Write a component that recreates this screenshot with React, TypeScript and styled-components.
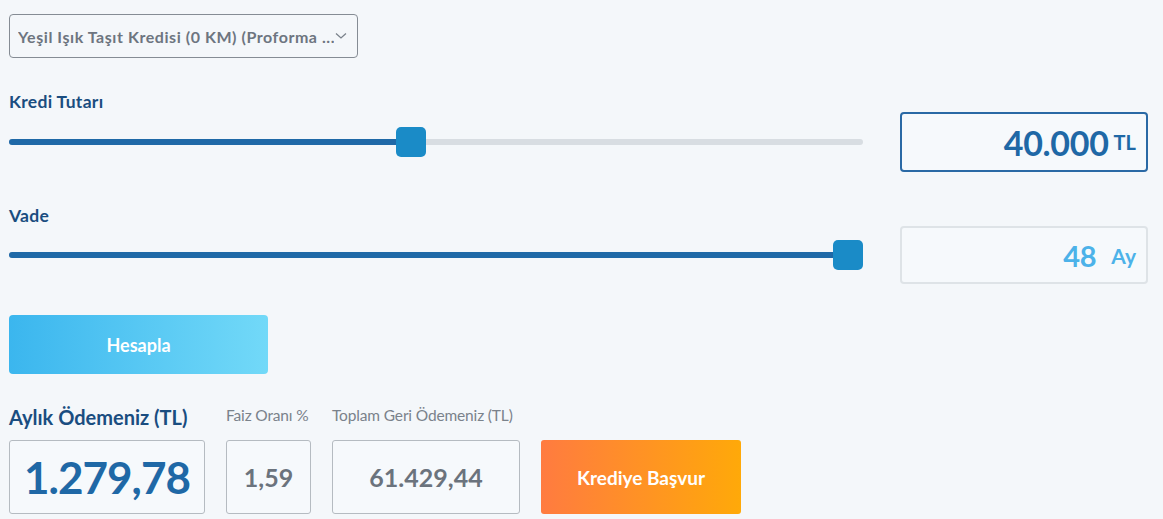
import React from "react";
import styled, { createGlobalStyle } from "styled-components";

const GlobalStyle = createGlobalStyle`
  html, body {
    margin: 0;
    padding: 0;
    background: #f4f7fa;
  }
  body {
    font-family: Lato, "Open Sans", sans-serif;
  }
`;

const Page = styled.div`
  width: 1163px;
  height: 519px;
  box-sizing: border-box;
  padding: 14px 15px 0 9px;
  overflow: hidden;
`;

const Select = styled.div`
  width: 349px;
  height: 44px;
  box-sizing: border-box;
  border: 1px solid #858c94;
  border-radius: 4px;
  display: flex;
  align-items: center;
  padding: 0 10px 0 8px;
  gap: 1px;
  color: #6d7580;
  font-size: 16px;
  font-weight: 700;
  white-space: nowrap;
`;

const SelectText = styled.span`
  overflow: hidden;
  letter-spacing: 0.55px;
`;

const FieldLabel = styled.div`
  margin-top: 34px;
  height: 20px;
  line-height: 20px;
  font-size: 17.5px;
  font-weight: 700;
  color: #1a4d80;
  letter-spacing: 0.3px;
`;

const FieldRow = styled.div<{ $height: number }>`
  display: grid;
  grid-template-columns: 854px 248px;
  column-gap: 37px;
  align-items: center;
  height: ${(p) => p.$height}px;
`;

const Track = styled.div`
  position: relative;
  height: 6px;
  border-radius: 3px;
  background: #d8dde2;
`;

const Fill = styled.div`
  height: 100%;
  border-radius: 3px;
  background: #1f69a7;
`;

const Thumb = styled.div`
  position: absolute;
  top: -12px;
  width: 30px;
  height: 30px;
  border-radius: 5px;
  background: #1a8bc7;
`;

const ValueBox = styled.div<{ $active?: boolean }>`
  height: 100%;
  box-sizing: border-box;
  border: 2px solid ${(p) => (p.$active ? "#2a69a5" : "#dee3e7")};
  border-radius: 4px;
  background: #f6f9fc;
  display: flex;
  align-items: center;
  justify-content: flex-end;
  padding-right: 10px;
  color: ${(p) => (p.$active ? "#1f68a6" : "#4cb2e9")};
`;

const BigNumber = styled.span<{ $size: number }>`
  font-size: ${(p) => p.$size}px;
  font-weight: 700;
  letter-spacing: -0.3px;
`;

const Unit = styled.span<{ $size: number; $gap: number }>`
  font-size: ${(p) => p.$size}px;
  font-weight: 700;
  margin-left: ${(p) => p.$gap}px;
`;

const CalcButton = styled.button`
  margin-top: 31px;
  width: 259px;
  height: 59px;
  border: none;
  border-radius: 4px;
  background: linear-gradient(90deg, #3bb6ee 0%, #72d9f8 100%);
  color: #fff;
  font-family: inherit;
  font-size: 18px;
  font-weight: 700;
  display: block;
`;

const Results = styled.div`
  margin-top: 31px;
  display: flex;
  align-items: flex-end;
  gap: 21px;
`;

const Column = styled.div<{ $width: number }>`
  width: ${(p) => p.$width}px;
  flex: none;
  display: flex;
  flex-direction: column;
`;

const MainLabel = styled.div`
  font-size: 20px;
  line-height: 24px;
  font-weight: 700;
  color: #1a4d80;
  margin-bottom: 11px;
  white-space: nowrap;
`;

const SubLabel = styled.div`
  font-size: 15.5px;
  line-height: 20px;
  color: #7a828b;
  margin-bottom: 15px;
  white-space: nowrap;
  letter-spacing: -0.15px;
`;

const ResultBox = styled.div<{ $main?: boolean }>`
  height: 74px;
  box-sizing: border-box;
  border: 1px solid #b5bbc1;
  border-radius: 3px;
  background: #f6f9fc;
  display: flex;
  align-items: center;
  justify-content: center;
  font-weight: 700;
  font-size: ${(p) => (p.$main ? 44 : 25)}px;
  color: ${(p) => (p.$main ? "#1f68a6" : "#6b737d")};
  letter-spacing: ${(p) => (p.$main ? -1 : 0)}px;
`;

const ApplyButton = styled.button`
  width: 200px;
  height: 74px;
  flex: none;
  border: none;
  border-radius: 3px;
  background: linear-gradient(90deg, #ff7b40 0%, #ffa909 100%);
  color: #fff;
  font-family: inherit;
  font-size: 19px;
  font-weight: 700;
`;

const Chevron = () => (
  <svg width="12" height="8" viewBox="0 0 12 8">
    <path d="M1 1.5 L6 6 L11 1.5" fill="none" stroke="#7a828b" strokeWidth="1.3" />
  </svg>
);

const Slider = ({ pct }: { pct: number }) => (
  <Track>
    <Fill style={{ width: `calc(${pct} * (100% - 30px) + 15px)` }} />
    <Thumb style={{ left: `calc(${pct} * (100% - 30px))` }} />
  </Track>
);

export default function App() {
  return (
    <Page>
      <GlobalStyle />
      <Select>
        <SelectText>Yeşil Işık Taşıt Kredisi (0 KM) (Proforma ...</SelectText>
        <Chevron />
      </Select>

      <FieldLabel>Kredi Tutarı</FieldLabel>
      <FieldRow $height={60}>
        <Slider pct={0.4697} />
        <ValueBox $active>
          <BigNumber $size={34}>40.000</BigNumber>
          <Unit $size={20} $gap={5}>TL</Unit>
        </ValueBox>
      </FieldRow>

      <FieldLabel>Vade</FieldLabel>
      <FieldRow $height={58}>
        <Slider pct={1} />
        <ValueBox>
          <BigNumber $size={29}>48</BigNumber>
          <Unit $size={21} $gap={15}>Ay</Unit>
        </ValueBox>
      </FieldRow>

      <CalcButton>Hesapla</CalcButton>

      <Results>
        <Column $width={196}>
          <MainLabel>Aylık Ödemeniz (TL)</MainLabel>
          <ResultBox $main>1.279,78</ResultBox>
        </Column>
        <Column $width={85}>
          <SubLabel>Faiz Oranı %</SubLabel>
          <ResultBox>1,59</ResultBox>
        </Column>
        <Column $width={188}>
          <SubLabel>Toplam Geri Ödemeniz (TL)</SubLabel>
          <ResultBox>61.429,44</ResultBox>
        </Column>
        <ApplyButton>Krediye Başvur</ApplyButton>
      </Results>
    </Page>
  );
}
